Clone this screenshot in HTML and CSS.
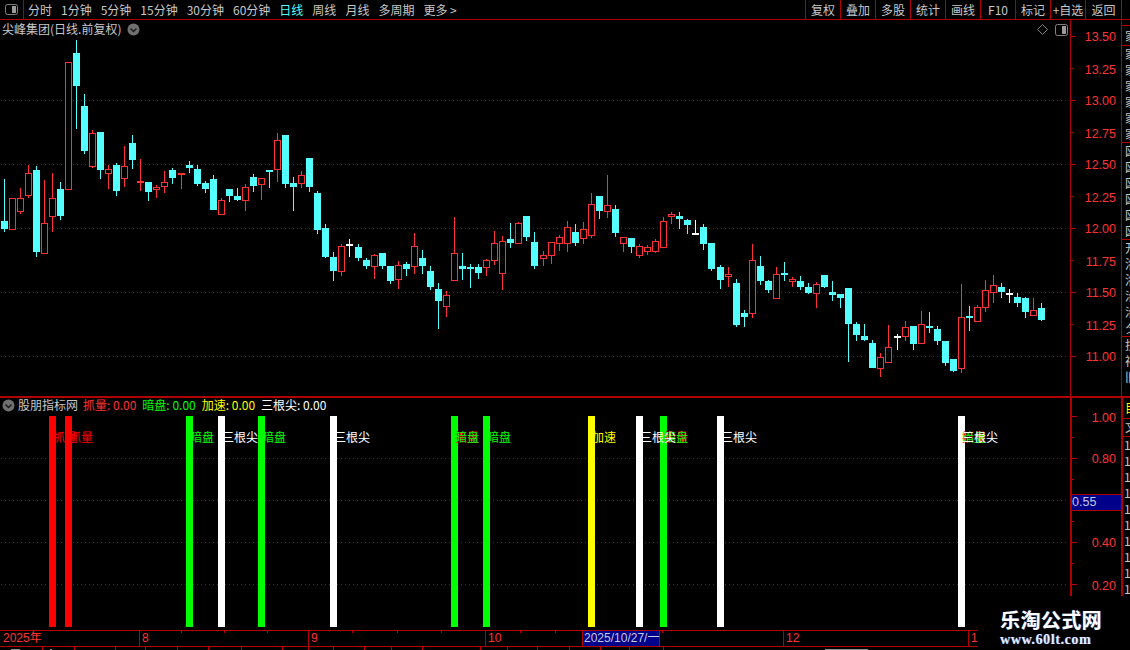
FILE: index.html
```html
<!DOCTYPE html>
<html lang="zh">
<head>
<meta charset="utf-8">
<title>尖峰集团</title>
<link rel="stylesheet" href="styles.css">
</head>
<body>
<div class="app">
  <header class="toolbar">
    <div class="toggle-cell"><svg class="toggle-icon" width="13" height="11" viewBox="0 0 13 11"><rect x=".5" y=".5" width="12" height="10" rx="2" class="ti-frame"/><rect x="7" y="2" width="4" height="7" class="ti-fill"/></svg></div>
    <nav class="periods">
      <span>分时</span><span>1分钟</span><span>5分钟</span><span>15分钟</span><span>30分钟</span><span>60分钟</span><span class="active">日线</span><span>周线</span><span>月线</span><span>多周期</span><span>更多 &gt;</span>
    </nav>
    <nav class="actions">
      <span>复权</span><span>叠加</span><span>多股</span><span>统计</span><span>画线</span><span>F10</span><span>标记</span><span>+自选</span><span>返回</span>
    </nav>
  </header>

  <section class="pane pane-price">
    <div class="plot">
      <svg class="chart" width="1070" height="376" viewBox="0 20 1070 376">
        <path class="grid" d="M1 100.5H1069M1 164.5H1069M1 228.5H1069M1 292.5H1069M1 356.5H1069"/>
        <g id="candles"></g>
      </svg>
      <div class="plot-title">
        <span>尖峰集团(日线.前复权)</span>
        <svg class="chev" width="13" height="13" viewBox="0 0 13 13"><circle cx="6.5" cy="6.5" r="6" class="chev-bg"/><path d="M3.5 5.5l3 3 3-3" class="chev-mark"/></svg>
      </div>
      <div class="plot-tools">
        <svg width="11" height="11" viewBox="0 0 11 11"><path d="M5.5.5l5 5-5 5-5-5z" class="ti-frame"/></svg>
        <svg width="13" height="12" viewBox="0 0 13 12"><rect x=".5" y=".5" width="12" height="11" rx="2" class="ti-frame"/><rect x="7" y="2" width="4" height="8" class="ti-fill"/></svg>
      </div>
    </div>
    <div class="axis">
      <svg width="50" height="376" viewBox="1071 20 50 376">
        <path class="tick" d="M1071 36.5h5M1071 68.5h2M1071 100.5h5M1071 132.5h2M1071 164.5h5M1071 196.5h2M1071 228.5h5M1071 260.5h2M1071 292.5h5M1071 324.5h2M1071 356.5h5"/>
        <g class="axis-text">
          <text x="1116" y="41">13.50</text><text x="1116" y="74">13.25</text><text x="1116" y="105">13.00</text><text x="1116" y="138">12.75</text><text x="1116" y="169">12.50</text><text x="1116" y="202">12.25</text><text x="1116" y="233">12.00</text><text x="1116" y="266">11.75</text><text x="1116" y="297">11.50</text><text x="1116" y="330">11.25</text><text x="1116" y="361">11.00</text>
        </g>
      </svg>
    </div>
    <aside class="side">
      <div class="side-group sg-a"></div>
      <div class="side-group sg-b"><p>家</p></div>
      <div class="side-group sg-c"><p>家家家家家家</p></div>
      <div class="side-group sg-d"><p>図図図図図図</p></div>
      <div class="side-group sg-d"><p>开洛洛沿沿夕</p></div>
      <div class="side-group sg-e"><p>技祥旧</p></div>
    </aside>
  </section>

  <section class="pane pane-ind">
    <div class="plot">
      <svg class="chart" width="1070" height="232" viewBox="0 398 1070 232">
        <path class="grid" d="M1 458.5H1069M1 500.5H1069M1 542.5H1069M1 584.5H1069"/>
        <g class="bar-red"><rect x="49" y="416" width="7" height="211"/><rect x="65" y="416" width="7" height="211"/></g>
        <g class="bar-green"><rect x="186" y="416" width="7" height="211"/><rect x="258" y="416" width="7" height="211"/><rect x="451" y="416" width="7" height="211"/><rect x="483" y="416" width="7" height="211"/><rect x="660" y="416" width="7" height="211"/></g>
        <rect class="bar-yellow" x="588" y="416" width="7" height="211"/>
        <g class="bar-white"><rect x="218" y="416" width="7" height="211"/><rect x="330" y="416" width="7" height="211"/><rect x="636" y="416" width="7" height="211"/><rect x="717" y="416" width="7" height="211"/><rect x="958" y="416" width="7" height="211"/></g>
        <g class="sig sig-red"><text x="53" y="442">抓量</text><text x="69" y="442">抓量</text><text x="455" y="442">抓量</text><text x="664" y="442">抓量</text><text x="962" y="442">抓量</text></g>
        <g class="sig sig-green"><text x="190" y="442">暗盘</text><text x="262" y="442">暗盘</text><text x="455" y="442">暗盘</text><text x="487" y="442">暗盘</text><text x="664" y="442">暗盘</text><text x="962" y="442">暗盘</text></g>
        <g class="sig sig-yellow"><text x="592" y="442">加速</text></g>
        <g class="sig sig-white"><text x="222" y="442">三根尖</text><text x="334" y="442">三根尖</text><text x="640" y="442">三根尖</text><text x="721" y="442">三根尖</text><text x="962" y="442">三根尖</text></g>
      </svg>
      <div class="ind-title">
        <svg class="chev" width="13" height="13" viewBox="0 0 13 13"><circle cx="6.5" cy="6.5" r="6" class="chev-bg"/><path d="M3.5 5.5l3 3 3-3" class="chev-mark"/></svg>
        <span class="ind-name">股朋指标网</span>
        <span class="c-red">抓量: 0.00</span>
        <span class="c-green">暗盘: 0.00</span>
        <span class="c-yellow">加速: 0.00</span>
        <span class="c-white">三根尖: 0.00</span>
      </div>
    </div>
    <div class="axis axis-ind">
      <svg width="49" height="232" viewBox="1072 398 49 232">
        <path class="tick" d="M1072 416.5h5M1072 437.5h2M1072 458.5h5M1072 479.5h2M1072 500.5h5M1072 521.5h2M1072 542.5h5M1072 563.5h2M1072 584.5h5"/>
        <g class="axis-text">
          <text x="1116" y="422">1.00</text><text x="1116" y="463">0.80</text><text x="1116" y="547">0.40</text><text x="1116" y="590">0.20</text>
        </g>
      </svg>
      <div class="cursor-value">0.55</div>
    </div>
    <aside class="side side-ind">
      <div class="side-group sg-f"><p class="c-yellow">目</p></div>
      <div class="side-group sg-g"><p>文</p></div>
      <div class="side-nums">1<br>1<br>1<br>1<br>1<br>1<br>1<br>1<br>1<br>1</div>
    </aside>
  </section>

  <footer class="timeaxis">
    <div class="t-row">
      <span class="t-cell t-year">2025年</span>
      <span class="t-cell t-aug">8</span>
      <span class="t-cell t-sep">9</span>
      <span class="t-cell t-oct">10</span>
      <span class="t-cell t-cursor">2025/10/27/一</span>
      <span class="t-cell t-gap"></span>
      <span class="t-cell t-dec">12</span>
      <span class="t-cell t-jan">1</span>
    </div>
    <svg class="t-ticks" width="1130" height="20" viewBox="0 630 1130 20">
      <path class="tick" d="M181.5 631v2M224.5 631v2M267.5 631v2M352.5 631v2M397.5 631v2M441.5 631v2M520.5 631v2M555.5 631v2M662.5 631v2M42.5 647v3M74.5 647v3M115.5 647v3M145.5 647v3M177.5 647v3M208.5 647v3M241.5 647v3M282.5 647v3M308.5 647v3M333.5 647v3M364.5 647v3M391.5 647v3M422.5 647v3M480.5 647v3M507.5 647v3M537.5 647v3M569.5 647v3M600.5 647v3M629.5 647v3M663.5 647v3"/>
      <path class="t-bits" d="M11 649.5h9M50 649.5h2M825 649.5h43"/>
    </svg>
  </footer>

  <div class="watermark">
    <div class="wm-cn">乐淘公式网</div>
    <div class="wm-url">www.60lt.com</div>
  </div>
</div>
<script src="chart.js"></script>
</body>
</html>
```

FILE: styles.css
```css
* { box-sizing: border-box; }
html, body { margin: 0; padding: 0; background: #000; }
body { width: 1130px; height: 650px; overflow: hidden; font: 12px/16px "Noto Sans CJK SC", "Liberation Sans", sans-serif; color: #c8c8c8; }
svg { display: block; }
p { margin: 0; }

.app { position: relative; width: 1130px; height: 650px; display: flex; flex-direction: column; }

/* toolbar */
.toolbar { display: flex; height: 20px; flex: none; border-bottom: 1px solid #b00000; line-height: 19px; }
.toggle-cell { width: 24px; border-right: 1px solid #b00000; display: flex; align-items: center; justify-content: center; padding-right: 1px; }
.ti-frame { fill: none; stroke: #808080; }
.ti-fill { fill: #9a9a9a; }
.periods { display: flex; gap: 9px; padding-left: 4px; }
.periods .active { color: #54ffff; }
.actions { display: flex; margin-left: auto; margin-right: 8px; }
.actions span { width: 35px; text-align: center; border-left: 1px solid #b00000; }
.actions span:last-child { width: 37px; border-right: 1px solid #b00000; }

/* panes */
.pane { display: flex; flex: none; }
.pane-price { height: 376px; }
.pane-ind { height: 234px; border-top: 2px solid #b00000; }
.plot { position: relative; width: 1070px; flex: none; }
.axis { position: relative; width: 51px; flex: none; border-left: 1px solid #b00000; }
.axis-ind { border-left-width: 2px; }
.grid { fill: none; stroke: #a80000; stroke-dasharray: 1 3; }
.tick { fill: none; stroke: #c00000; }
.axis-text text { fill: #ff3232; font: 12.5px "Liberation Sans", sans-serif; text-anchor: end; }

.plot-title { position: absolute; left: 2px; top: 1px; display: flex; align-items: center; gap: 6px; height: 16px; }
.plot-tools { position: absolute; left: 1037px; top: 4px; display: flex; gap: 7px; }
.chev-bg { fill: #707070; }
.chev-mark { fill: none; stroke: #1a1a1a; stroke-width: 1.4; }

.ind-title { position: absolute; left: 2px; top: 0; height: 16px; display: flex; align-items: center; margin-top: -1px; }
.ind-title span { margin-right: 6px; white-space: nowrap; }
.ind-title .ind-name { margin-left: 3px; margin-right: 5px; }
.c-red { color: #ff3232; }
.c-green { color: #00ff00; }
.c-yellow { color: #ffff00; }
.c-white { color: #fff; }

.bar-red { fill: #ff0000; }
.bar-green { fill: #00ff00; }
.bar-yellow { fill: #ffff00; }
.bar-white { fill: #fff; }
.sig text { font-size: 12px; }
.sig-red text { fill: #ff0000; }
.sig-green text { fill: #00ff00; }
.sig-yellow text { fill: #ffff00; }
.sig-white text { fill: #fff; }

.cursor-value { position: absolute; left: 0; top: 96px; width: 49px; height: 17px; background: #00008b; border-top: 1px solid #b00000; border-bottom: 1px solid #b00000; color: #c8c8e0; font: 12.5px/15px "Liberation Sans", sans-serif; }

/* right clipped column */
.side { flex: 1; min-width: 0; overflow: hidden; border-left: 1px solid #b00000; padding-left: 2px; }
.side-ind { border-left-width: 2px; padding-left: 1px; }
.side-group { margin-left: -2px; padding-left: 3px; border-bottom: 1px solid #b00000; overflow: hidden; }
.side-group p { width: 12px; line-height: 16px; }
.sg-a { height: 6px; }
.sg-b { height: 20px; padding-top: 2px; }
.sg-c { height: 97px; }
.sg-d { height: 97px; }
.sg-e { height: 59px; border-bottom: 0; }
.sg-f { height: 21px; padding-top: 2px; }
.sg-g { height: 18px; }
.side-nums { line-height: 16px; height: 163px; overflow: hidden; }

/* time axis */
.timeaxis { position: relative; flex: none; height: 20px; }
.t-row { display: flex; height: 17px; border-top: 1px solid #b00000; border-bottom: 1px solid #b00000; color: #ff3232; line-height: 15px; font-family: "Liberation Sans", "Noto Sans CJK SC", sans-serif; }
.t-cell { flex: none; padding-left: 2px; border-left: 1px solid #b00000; white-space: nowrap; }
.t-year { width: 139px; padding-left: 3px; border-left: 0; }
.t-aug { width: 169px; }
.t-sep { width: 177px; }
.t-oct { width: 97px; }
.t-cursor { width: 78px; background: #00008b; color: #c8c8e0; padding-left: 1px; border-right: 1px solid #b00000; }
.t-gap { width: 123px; border-left: 0; }
.t-dec { width: 185px; }
.t-jan { width: 162px; }
.t-ticks { position: absolute; left: 0; top: 0; }
.t-bits { fill: none; stroke: #909090; }

/* watermark */
.watermark { position: absolute; right: 0; bottom: 0; width: 152px; height: 54px; background: #000; padding: 12px 0 0 22px; }
.wm-cn { color: #fff; font: bold 20px/24px "Noto Sans CJK SC", sans-serif; letter-spacing: .4px; text-shadow: 1px 0 0 #2a4aa0; white-space: nowrap; }
.wm-url { color: #e8eeff; font: bold 14px/16px "Liberation Serif", serif; letter-spacing: .6px; text-shadow: 1px 0 0 #2a4aa0; white-space: nowrap; }
```

FILE: chart.js
```js
// type, wick top, wick bottom, body top, body bottom (pixel rows)
var CANDLES = [
["c",179,232,221,229],["r",198,230,198,230],["r",188,214,198,212],["r",165,198,173,196],["c",166,257,170,252],
["r",180,254,223,254],["r",173,232,198,217],["c",182,220,189,216],["r",62,190,62,190],["c",40,129,53,86],
["c",94,154,106,151],["r",130,168,133,167],["c",132,179,132,170],["r",165,189,169,174],["c",163,196,165,191],
["r",146,187,166,179],["c",135,169,143,160],["r",159,191,181,183],["c",182,201,182,192],["r",185,198,187,190],
["r",171,193,182,187],["c",168,184,170,178],["r",173,189,173,175],["c",161,173,165,168],["c",165,186,169,184],
["c",181,193,183,189],["c",175,210,179,210],["r",198,215,200,215],["c",189,202,189,196],["c",188,201,196,200],
["r",184,211,187,201],["c",174,192,177,186],["r",178,200,178,185],["c",170,188,170,172],["r",133,182,140,170],
["c",135,188,135,184],["c",177,211,183,187],["r",171,188,175,184],["c",158,192,158,187],["c",191,234,193,230],
["c",224,258,228,257],["c",252,281,257,271],["r",244,276,246,272],["w",239,257,244,246],["c",244,261,247,258],
["c",258,269,260,266],["r",254,279,255,267],["c",253,269,253,266],["c",266,284,266,281],["r",261,289,265,280],
["c",262,276,264,269],["r",233,274,246,267],["c",250,274,258,266],["c",266,290,271,287],["c",283,329,289,301],
["r",291,317,295,307],["r",217,281,253,281],["c",253,280,266,269],["c",264,288,267,269],["c",264,279,267,273],
["r",259,276,260,268],["r",231,265,243,261],["r",236,290,241,274],["c",223,248,239,243],["r",222,244,223,244],
["c",216,241,216,237],["c",232,269,242,266],["r",251,266,255,259],["r",242,264,242,256],["r",235,251,237,244],
["r",221,252,227,244],["c",224,246,232,243],["r",222,244,229,239],["r",193,238,204,236],["c",196,219,196,211],
["r",175,218,205,212],["c",205,237,209,233],["r",237,252,237,244],["c",238,253,238,247],["r",244,258,246,256],
["r",245,255,247,252],["r",239,253,241,252],["r",217,248,221,248],["r",212,224,214,217],["c",212,229,216,219],
["c",219,234,220,225],["w",220,234,233,235],["c",224,250,227,244],["c",243,271,243,269],["c",265,289,267,280],
["r",267,287,274,277],["c",279,327,283,325],["c",310,327,313,317],["r",244,318,260,314],["c",256,285,266,281],
["c",280,293,281,290],["r",267,299,274,299],["k",262,281,273,275],["r",277,287,279,282],["c",276,290,281,287],
["c",283,294,287,293],["r",282,308,284,294],["c",275,288,275,287],["c",281,301,292,295],["c",294,308,294,298],
["c",288,362,288,324],["c",322,341,324,335],["c",324,341,336,340],["c",340,368,343,368],["r",353,377,357,369],
["r",325,363,347,363],["w",334,350,336,338],["r",321,341,327,337],["c",326,350,326,344],["r",311,344,324,344],
["k",312,333,326,328],["c",326,345,329,341],["c",341,366,341,363],["c",359,372,359,371],["r",284,373,317,369],
["k",306,331,316,318],["r",305,322,307,322],["r",280,312,290,308],["r",275,303,285,293],["c",283,298,287,292],
["w",289,303,293,295],["c",293,307,297,303],["c",297,318,298,312],["r",298,316,310,316],["c",303,321,308,320]
];

(function () {
  var NS = "http://www.w3.org/2000/svg";
  var host = document.getElementById("candles");
  var steps = [22, 44, 67, 89, 111];
  var colour = { c: "#54ffff", k: "#54ffff", r: "#ff3232", w: "#ffffff" };

  function rect(x, y, w, h, attrs) {
    var el = document.createElementNS(NS, "rect");
    el.setAttribute("x", x); el.setAttribute("y", y);
    el.setAttribute("width", w); el.setAttribute("height", h);
    for (var k in attrs) el.setAttribute(k, attrs[k]);
    host.appendChild(el);
  }

  CANDLES.forEach(function (c, i) {
    var shift = steps.filter(function (t) { return i >= t; }).length;
    var cx = 4 + 8 * i + shift;
    var col = colour[c[0]];
    rect(cx, c[1], 1, c[2] - c[1], { fill: col });
    if (c[0] === "r") {
      rect(cx - 2.5, c[3] + 0.5, 6, Math.max(c[4] - c[3] - 1, 1), { fill: "#000", stroke: col });
    } else {
      rect(cx - 3, c[3], 7, c[4] - c[3], { fill: col });
    }
  });
})();
```
